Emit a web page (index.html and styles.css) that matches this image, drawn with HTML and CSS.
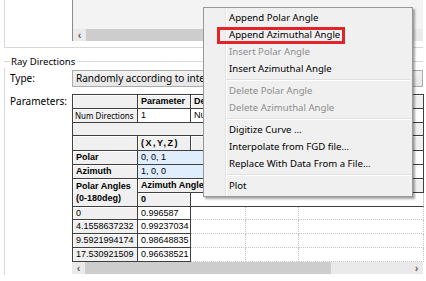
FILE: index.html
```html
<!DOCTYPE html>
<html lang="en">
<head>
    <meta charset="UTF-8">
    <title>Ray Directions - Parameters</title>
    <link rel="stylesheet" href="styles.css">
</head>
<body>
    <div class="window">
        <div class="upper-group">
            <div class="list-box">
                <div class="hscroll">
                    <span class="arrow">&lsaquo;</span>
                    <div class="thumb"></div>
                </div>
            </div>
        </div>

        <div class="group-title"><span>Ray Directions</span></div>
        <div class="group-body">
            <div class="field-row">
                <label>Type:</label>
                <div class="combo">Randomly according to intensity distribution</div>
            </div>
            <div class="field-row params">
                <label>Parameters:</label>
                <div class="grid-wrap">
                    <table class="param-table">
                        <colgroup>
                            <col class="c1"><col class="c2"><col class="c3"><col class="c4"><col class="c5">
                        </colgroup>
                        <tbody>
                            <tr class="h14">
                                <th></th><th>Parameter</th><th>Description</th><th></th><th></th>
                            </tr>
                            <tr class="h14">
                                <th class="name small">Num Directions</th><td class="val">1</td><td class="val">Number</td><td class="val"></td><td class="val"></td>
                            </tr>
                            <tr class="h13 bar">
                                <td colspan="5"></td>
                            </tr>
                            <tr class="h15">
                                <th></th><th class="xyz">(X,Y,Z)</th><th></th><th></th><th></th>
                            </tr>
                            <tr class="h14">
                                <th>Polar</th><td class="vec" colspan="2">0, 0, 1</td><td class="vec"></td><td class="val"></td>
                            </tr>
                            <tr class="h14">
                                <th>Azimuth</th><td class="vec" colspan="2">1, 0, 0</td><td class="vec"></td><td class="val"></td>
                            </tr>
                            <tr class="h14">
                                <th rowspan="2" class="multi">Polar Angles<br>(0-180deg)</th><th colspan="4">Azimuth Angle</th>
                            </tr>
                            <tr class="h14">
                                <th>0</th><td class="open" colspan="3"></td>
                            </tr>
                            <tr class="h13">
                                <th class="name">0</th><td class="num">0.996587</td><td class="empty"></td><td class="empty"></td><td class="empty"></td>
                            </tr>
                            <tr class="h14">
                                <th class="name">4.1558637232</th><td class="num">0.99237034</td><td class="empty"></td><td class="empty"></td><td class="empty"></td>
                            </tr>
                            <tr class="h14">
                                <th class="name">9.5921994174</th><td class="num">0.98648835</td><td class="empty"></td><td class="empty"></td><td class="empty"></td>
                            </tr>
                            <tr class="h14">
                                <th class="name">17.530921509</th><td class="num">0.96638521</td><td class="empty"></td><td class="empty"></td><td class="empty"></td>
                            </tr>
                        </tbody>
                    </table>
                    <div class="hscroll">
                        <span class="arrow">&lsaquo;</span>
                        <div class="thumb"></div>
                        <span class="arrow right">&rsaquo;</span>
                    </div>
                </div>
            </div>
        </div>

        <div class="context-menu">
            <div class="menu-item">Append Polar Angle</div>
            <div class="menu-item">Append Azimuthal Angle</div>
            <div class="menu-item disabled">Insert Polar Angle</div>
            <div class="menu-item">Insert Azimuthal Angle</div>
            <div class="menu-sep"></div>
            <div class="menu-item disabled">Delete Polar Angle</div>
            <div class="menu-item disabled">Delete Azimuthal Angle</div>
            <div class="menu-sep"></div>
            <div class="menu-item">Digitize Curve ...</div>
            <div class="menu-item">Interpolate from FGD file...</div>
            <div class="menu-item">Replace With Data From a File...</div>
            <div class="menu-sep"></div>
            <div class="menu-item">Plot</div>
            <!-- annotation frame around the picked item -->
            <div class="mark"></div>
        </div>
    </div>
</body>
</html>
```

FILE: styles.css
```css
body {
    margin: 0;
    background-color: #ffffff;
    font-family: "Noto Sans", "Open Sans", sans-serif;
    font-size: 10px;
    color: #000000;
}

.window {
    position: relative;
    width: 419px;
    margin-left: 4px;
}

/* group box that ends at the top of the view */
.upper-group {
    box-sizing: border-box;
    height: 48px;
    padding-left: 67px;
    border-left: 1px solid #d8d8d8;
    border-bottom: 1px solid #d8d8d8;
}

.list-box {
    height: 41px;
    display: flex;
    flex-direction: column;
    justify-content: flex-end;
    background-color: #f3f3f3;
    border-left: 1px solid #8a8a8a;
}

.hscroll {
    display: flex;
    align-items: center;
    height: 12px;
    background-color: #eaeaea;
}

.arrow {
    width: 13px;
    text-align: center;
    font-family: "Liberation Sans", sans-serif;
    font-size: 11px;
    font-weight: bold;
    line-height: 12px;
    color: #606060;
}

.arrow.right {
    margin-left: auto;
}

.thumb {
    width: 246px;
    height: 12px;
    background-color: #cdcdcd;
}

/* Ray Directions group */
.group-title {
    display: flex;
    align-items: center;
    height: 14px;
    margin-top: 6px;
    font-size: 9.6px;
}

.group-title::before {
    content: "";
    width: 6px;
    border-top: 1px solid #d8d8d8;
}

.group-title span {
    padding: 0 2px 0 1px;
}

.group-title::after {
    content: "";
    flex: 1;
    border-top: 1px solid #d8d8d8;
}

.group-body {
    border-left: 1px solid #d8d8d8;
    padding: 2px 0 1px;
}

.field-row {
    display: flex;
}

.field-row label {
    box-sizing: border-box;
    width: 67px;
    flex-shrink: 0;
    padding-left: 5px;
    line-height: 16px;
}

.combo {
    flex: 1;
    height: 15px;
    padding-left: 3px;
    line-height: 15px;
    white-space: nowrap;
    overflow: hidden;
    border: 1px solid #acacac;
    background: linear-gradient(#f2f2f2, #e6e6e6);
}

.params {
    margin-top: 7px;
}

.params label {
    line-height: 14px;
}

.grid-wrap {
    width: 351px;
}

/* parameter table */
.param-table {
    table-layout: fixed;
    width: 351px;
    border-collapse: separate;
    border-spacing: 0;
    border-top: 1px solid #3f3f3f;
    border-left: 1px solid #3f3f3f;
    font-family: "Liberation Sans", Arial, sans-serif;
    font-size: 9px;
}

.c1 { width: 65px; }
.c2 { width: 53px; }
.c3 { width: 55px; }
.c4 { width: 53px; }
.c5 { width: 125px; }

.h13 { height: 13px; }
.h14 { height: 14px; }
.h15 { height: 15px; }

.param-table th,
.param-table td {
    padding: 0 3px;
    text-align: left;
    white-space: nowrap;
    overflow: hidden;
    line-height: 11px;
    border-right: 1px solid #3f3f3f;
    border-bottom: 1px solid #3f3f3f;
}

.param-table th {
    font-weight: bold;
    background-color: #f0f0f0;
    box-shadow: inset 1px 1px 0 #ffffff;
}

.param-table th.name {
    font-weight: normal;
}

.param-table th.small {
    padding: 0 2px;
    font-family: "Noto Sans", sans-serif;
    font-size: 8px;
}

.param-table th.multi {
    vertical-align: top;
    padding-top: 1px;
    line-height: 12px;
}

.param-table th.xyz {
    letter-spacing: 1.5px;
}

.param-table td.val,
.param-table td.num {
    background-color: #ffffff;
}

.param-table td.vec {
    background-color: #dfedfd;
}

.param-table td.open {
    background-color: #ffffff;
    border-right-color: #d0d0d0;
}

.param-table td.empty {
    background-color: #ffffff;
    border-right: 1px dotted #c4c4c4;
    border-bottom: 1px dotted #c4c4c4;
}

.bar td {
    background-color: #f0f0f0;
}

/* right-click menu */
.context-menu {
    position: absolute;
    left: 199px;
    top: 7px;
    width: 208px;
    padding: 1px 0 2px;
    border: 1px solid #979797;
    background-color: #f0f0f0;
    background-image: linear-gradient(to right, transparent 21px, #e2e3e3 21px, #e2e3e3 22px, #ffffff 22px, #ffffff 23px, transparent 23px);
    box-shadow: 2px 2px 2px rgba(0, 0, 0, 0.35);
}

.menu-item {
    height: 17px;
    padding-left: 25px;
    line-height: 17px;
    font-size: 9.6px;
    white-space: nowrap;
}

.menu-item.disabled {
    color: #8d8d8d;
}

.menu-sep {
    height: 1px;
    margin: 2px 2px 1px 22px;
    background-color: #e0e0e0;
    border-bottom: 1px solid #ffffff;
}

.mark {
    position: absolute;
    left: 13px;
    top: 19px;
    box-sizing: border-box;
    width: 128px;
    height: 17px;
    border: 3px solid #e3232a;
}
```
